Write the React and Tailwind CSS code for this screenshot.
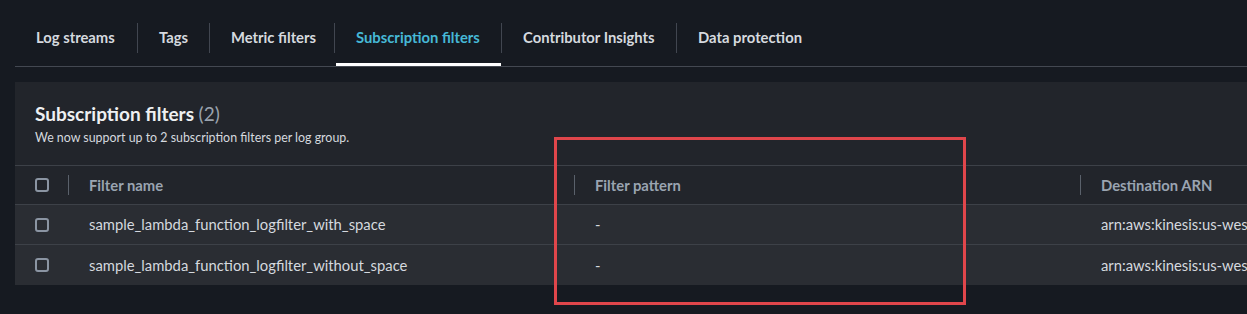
import React from "react";

const tabs = [
  { label: "Log streams", w: "w-[122px]" },
  { label: "Tags", w: "w-[72px]" },
  { label: "Metric filters", w: "w-[125px]" },
  { label: "Subscription filters", w: "w-[167px]", active: true },
  { label: "Contributor Insights", w: "w-[175px]" },
  { label: "Data protection", w: "w-[150px]" },
];

const rows = [
  { name: "sample_lambda_function_logfilter_with_space", pattern: "-", arn: "arn:aws:kinesis:us-west-2:123456789012:stream/sample" },
  { name: "sample_lambda_function_logfilter_without_space", pattern: "-", arn: "arn:aws:kinesis:us-west-2:123456789012:stream/sample" },
];

function Checkbox() {
  return <div className="w-[14px] h-[14px] rounded-[3px] border-2 border-[#8b95a3] shrink-0"></div>;
}

export default function App() {
  return (
    <div
      className="relative w-[1247px] h-[314px] overflow-hidden bg-[#161a21] pl-[15px]"
      style={{ fontFamily: "Lato, 'Open Sans', sans-serif" }}
    >
      {/* TABS */}
      <div className="w-[1260px] flex pt-[22px] border-b border-[#434851]">
        {tabs.map((t, i) => (
          <div key={t.label} className={`${t.w} flex flex-col shrink-0`}>
            <div className="flex h-[31px] items-center">
              {i > 0 && <div className="w-px h-[30px] bg-[#414650]"></div>}
              <span
                className={`pl-[21px] text-[14.8px] font-bold ${
                  t.active ? "text-[#46b8d6]" : "text-[#d5d9df]"
                }`}
              >
                {t.label}
              </span>
            </div>
            <div className="h-[10px]"></div>
            <div className={`h-[3px] ml-[2px] ${t.active ? "bg-white" : ""}`}></div>
          </div>
        ))}
      </div>

      {/* PANEL */}
      <div className="w-[1260px] mt-[15px] bg-[#22252b]">
        <div className="px-[20px] pt-[20px] pb-[19px]">
          <h2 className="text-[19px] leading-[24px] font-bold text-[#eef0f2]">
            Subscription filters <span className="font-normal text-[#9aa3ae]">(2)</span>
          </h2>
          <p className="mt-[4px] text-[12.4px] leading-[16px] text-[#d5d9df]">
            We now support up to 2 subscription filters per log group.
          </p>
        </div>

        {/* HEADER */}
        <div className="flex h-[40px] items-center border-t border-b border-[#3d4148] text-[14.8px] font-bold text-[#9aa4b1]">
          <div className="w-[53px] shrink-0 pl-[20px] flex items-center">
            <Checkbox />
          </div>
          <div className="w-[506px] shrink-0 flex items-center">
            <div className="w-px h-[20px] bg-[#5a616b]"></div>
            <span className="pl-[20px]">Filter name</span>
          </div>
          <div className="w-[506px] shrink-0 flex items-center">
            <div className="w-px h-[20px] bg-[#5a616b]"></div>
            <span className="pl-[20px]">Filter pattern</span>
          </div>
          <div className="flex-1 min-w-0 flex items-center">
            <div className="w-px h-[20px] bg-[#5a616b]"></div>
            <span className="pl-[20px]">Destination ARN</span>
          </div>
        </div>

        {/* ROWS */}
        {rows.map((r, i) => (
          <div
            key={r.name}
            className={`flex h-[40px] items-center bg-[#2a2d33] text-[14.8px] text-[#d5d9df] ${
              i < rows.length - 1 ? "border-b border-[#3d4148]" : ""
            }`}
          >
            <div className="w-[53px] shrink-0 pl-[20px] flex items-center">
              <Checkbox />
            </div>
            <div className="w-[506px] shrink-0 pl-[21px]">{r.name}</div>
            <div className="w-[506px] shrink-0 pl-[21px]">{r.pattern}</div>
            <div className="flex-1 min-w-0 pl-[21px] whitespace-nowrap">{r.arn}</div>
          </div>
        ))}
      </div>

      {/* HIGHLIGHT */}
      <div className="absolute left-[554px] top-[137px] w-[412px] h-[168px] border-[3px] border-[#e0464b]"></div>
    </div>
  );
}
